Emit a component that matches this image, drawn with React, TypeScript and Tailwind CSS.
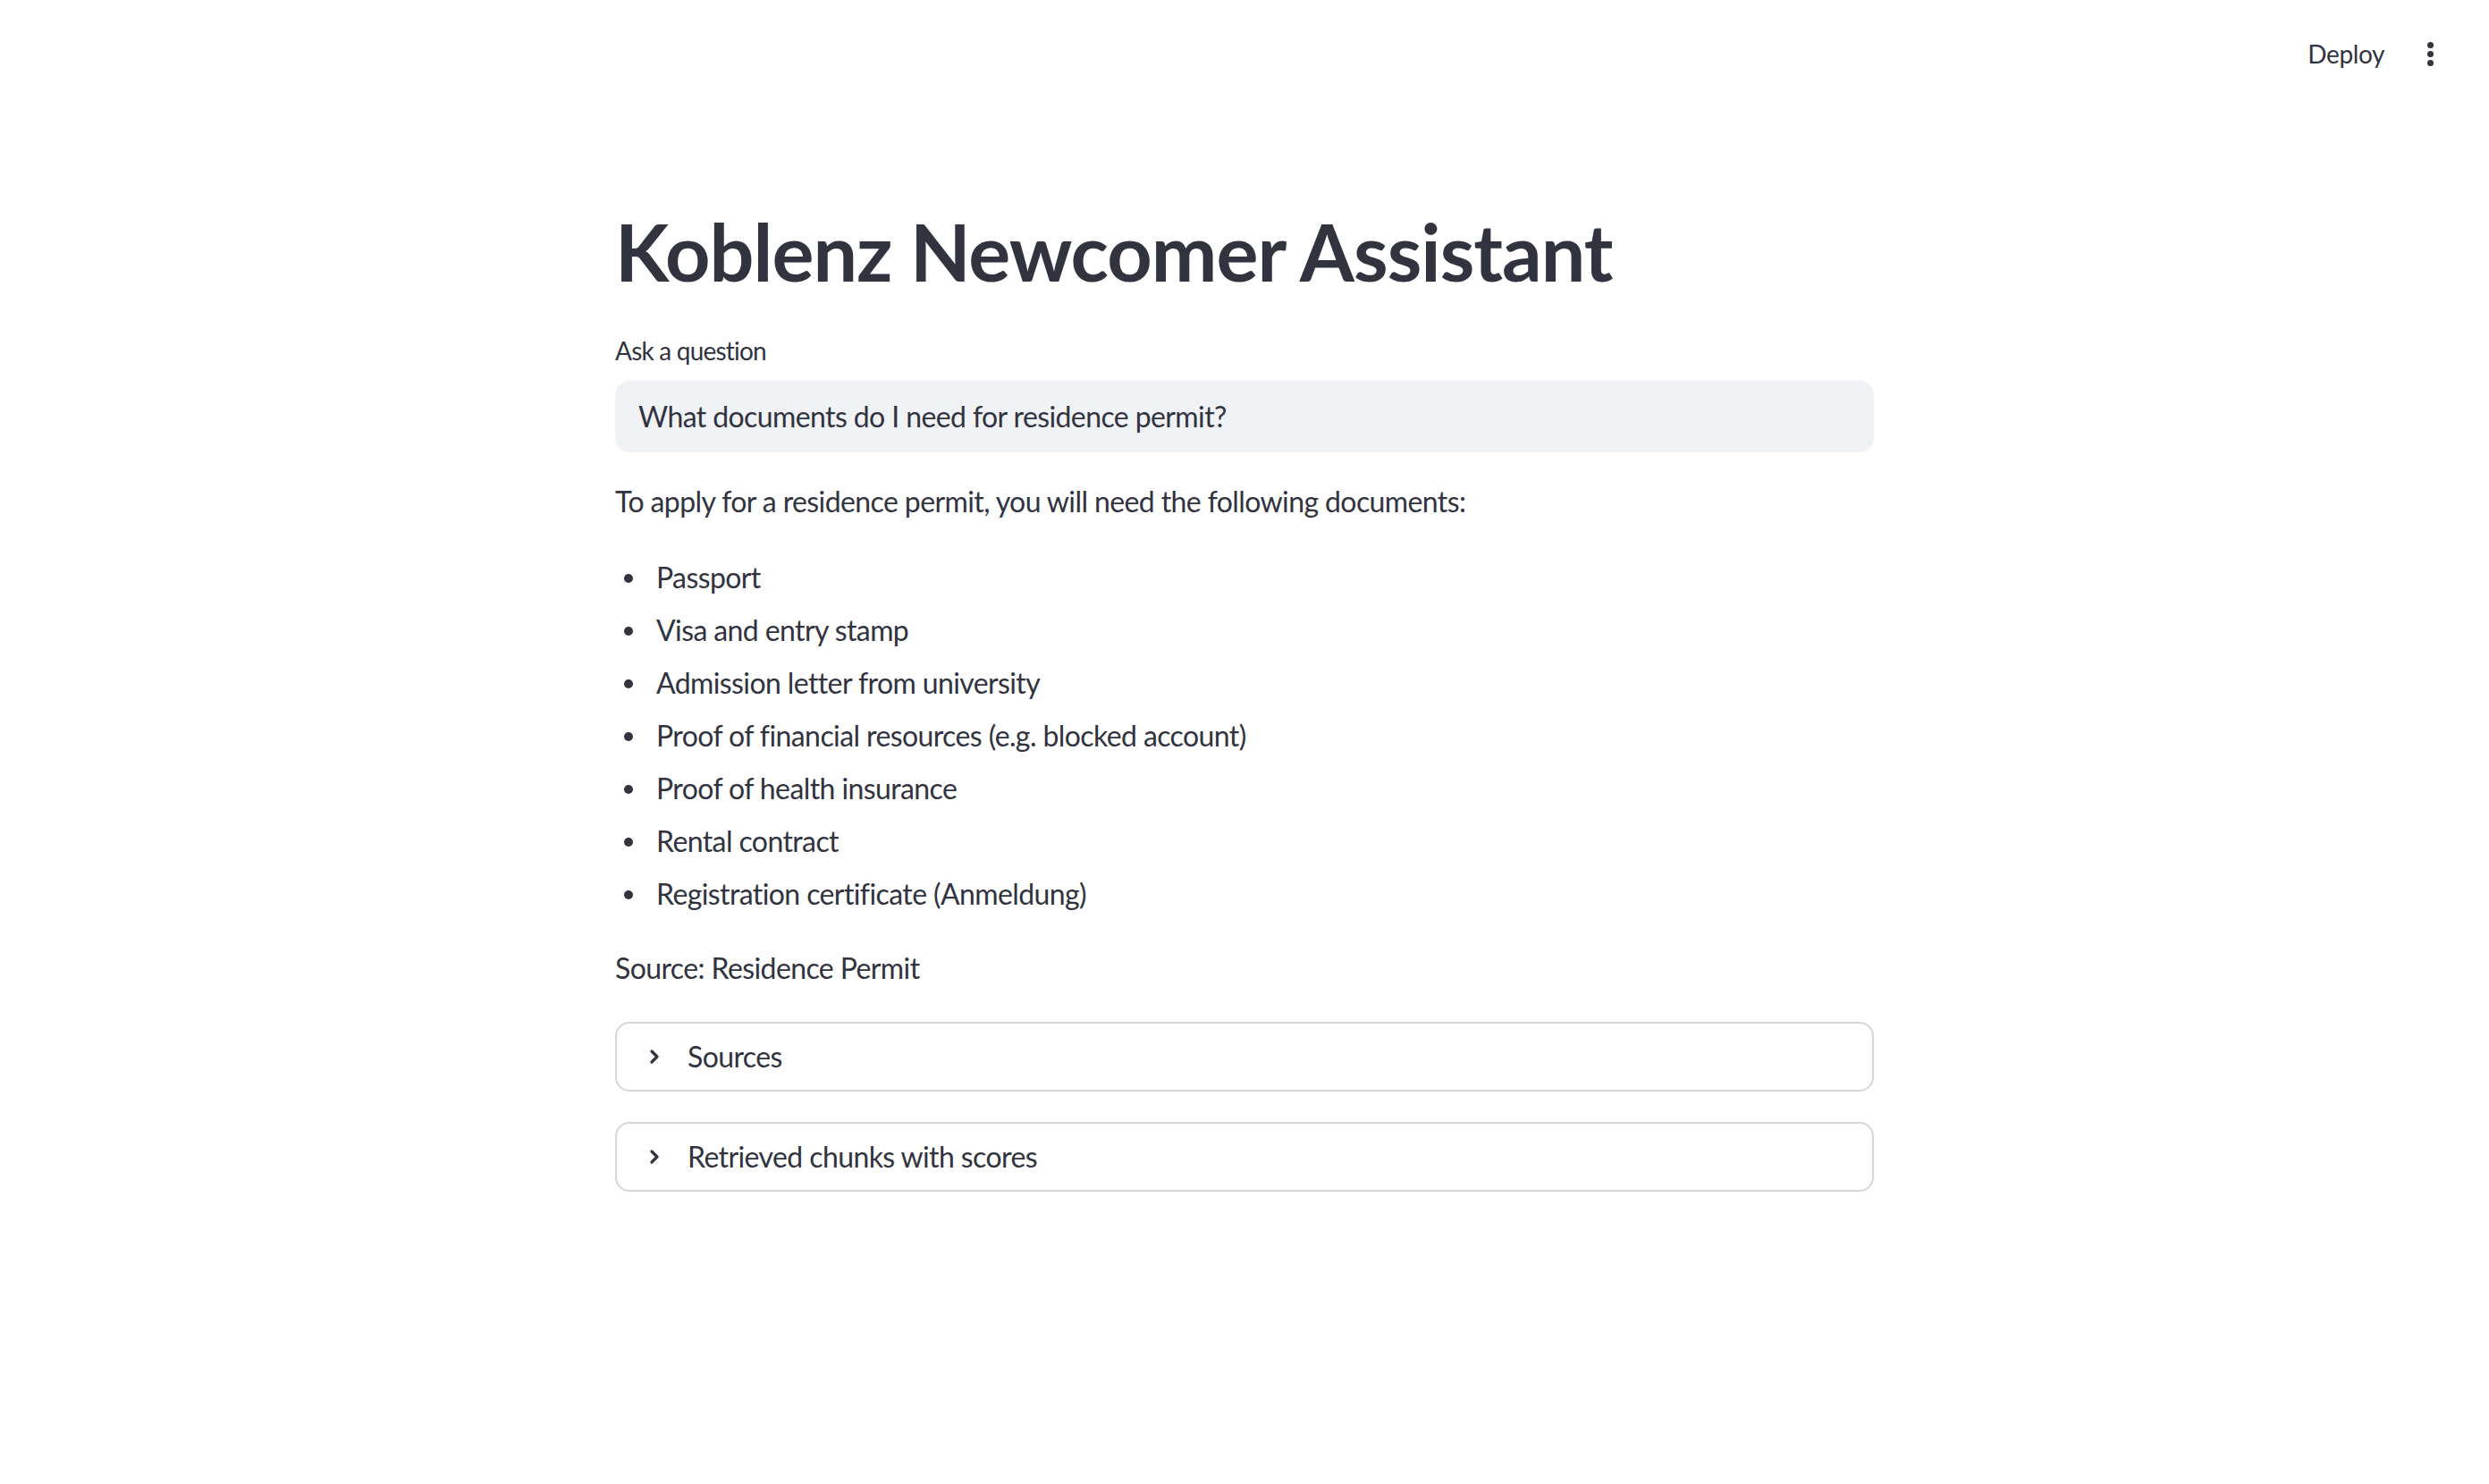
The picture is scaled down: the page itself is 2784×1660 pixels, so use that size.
import React from "react";

const items = [
  "Passport",
  "Visa and entry stamp",
  "Admission letter from university",
  "Proof of financial resources (e.g. blocked account)",
  "Proof of health insurance",
  "Rental contract",
  "Registration certificate (Anmeldung)",
];

function Chevron() {
  return (
    <svg width="16" height="18" viewBox="0 0 16 18" className="shrink-0">
      <path d="M5 3 L11 9 L5 15" fill="none" stroke="#31333f" strokeWidth="3.2" strokeLinecap="round" strokeLinejoin="round" />
    </svg>
  );
}

function Expander({ label }: { label: string }) {
  return (
    <div className="h-[78px] rounded-[16px] border-2 border-[#d6d6d9] flex items-center pl-[34px]">
      <Chevron />
      <span className="ml-[29px] text-[32px] leading-[40px] tracking-[-0.6px]">{label}</span>
    </div>
  );
}

export default function App() {
  return (
    <div className="min-h-screen bg-white text-[#31333f]" style={{ fontFamily: "Lato, 'Noto Sans', sans-serif" }}>
      {/* Header */}
      <header className="h-[120px] flex items-center justify-end pr-[62px]">
        <span className="text-[28px] leading-[40px] tracking-[-0.4px]">Deploy</span>
        <div className="ml-[48px] flex flex-col gap-[3px] items-center">
          <span className="w-[7px] h-[7px] rounded-full bg-[#31333f]" />
          <span className="w-[7px] h-[7px] rounded-full bg-[#31333f]" />
          <span className="w-[7px] h-[7px] rounded-full bg-[#31333f]" />
        </div>
      </header>

      <main className="w-[1408px] mx-auto pt-[108px] pb-[200px]">
        <h1 className="text-[88px] leading-[106px] font-bold tracking-[-1px]">Koblenz Newcomer Assistant</h1>

        {/* Question input */}
        <label className="block mt-[38px] text-[28px] leading-[40px] tracking-[-0.8px]">Ask a question</label>
        <div className="mt-[14px] h-[80px] rounded-[16px] bg-[#f0f2f6] flex items-center px-[26px]">
          <span className="text-[32px] tracking-[-0.6px]">What documents do I need for residence permit?</span>
        </div>

        {/* Answer */}
        <div className="tracking-[-0.6px] text-[32px] leading-[51px]">
          <p className="mt-[29px]">
            To apply for a residence permit, you will need the following documents:
          </p>
          <ul className="mt-[34px] flex flex-col gap-[8px]">
            {items.map((it) => (
              <li key={it} className="flex items-center">
                <span className="w-[10px] h-[10px] rounded-full bg-[#31333f] ml-[10px] mr-[26px] mt-[2px]" />
                {it}
              </li>
            ))}
          </ul>
          <p className="mt-[32px]">Source: Residence Permit</p>
        </div>

        {/* Expanders */}
        <div className="mt-[35px] flex flex-col gap-[34px]">
          <Expander label="Sources" />
          <Expander label="Retrieved chunks with scores" />
        </div>
      </main>
    </div>
  );
}
